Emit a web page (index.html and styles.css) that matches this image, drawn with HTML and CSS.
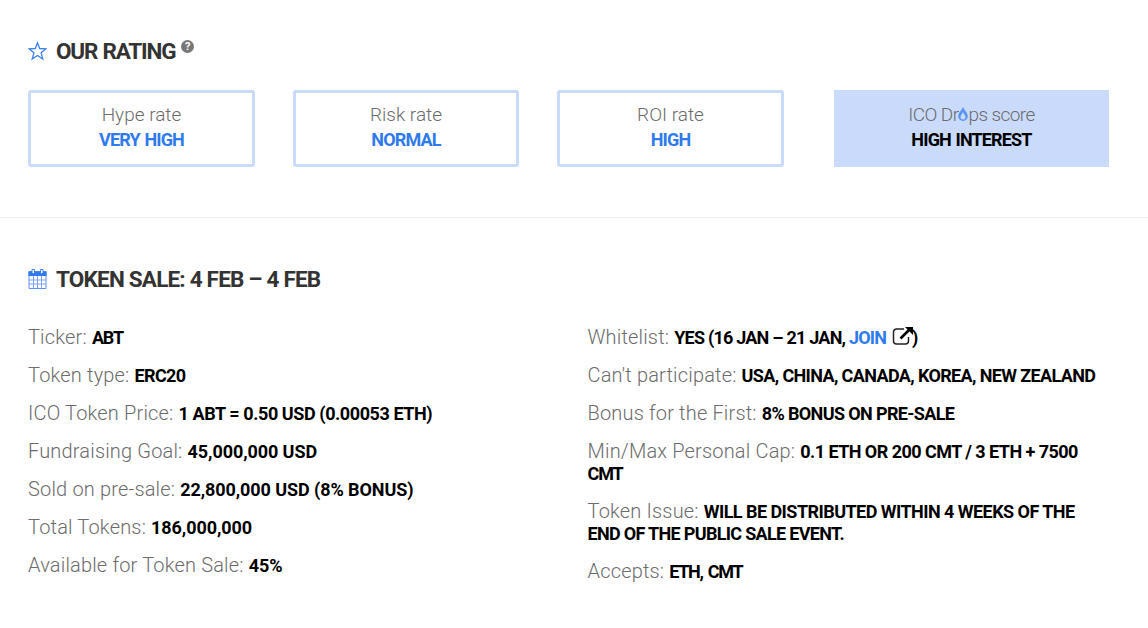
FILE: index.html
```html
<!DOCTYPE html>
<html lang="en">
<head>
  <meta charset="UTF-8">
  <meta name="viewport" content="width=device-width, initial-scale=1.0">
  <title>Token Sale</title>
  <link rel="stylesheet" href="styles.css">
</head>
<body>
  <!-- Rating -->
  <section class="rating">
    <h4 class="rating-title">
      <svg class="icon" viewBox="0 0 19 20" width="19" height="20"><path d="M9.500 1.800l2.200 5.700 6.300.3-4.900 4 1.700 6.200-5.300-3.500L4.200 18l1.700-6.200L1 7.800l6.300-.3z" fill="none" stroke="#3f80f2" stroke-width="1.300"/></svg>
      <span>OUR RATING</span>
      <span class="help">?</span>
    </h4>
    <div class="rating-list">
      <div class="rating-box"><p>Hype rate</p><strong>VERY HIGH</strong></div>
      <div class="rating-box"><p>Risk rate</p><strong>NORMAL</strong></div>
      <div class="rating-box"><p>ROI rate</p><strong>HIGH</strong></div>
      <div class="rating-box score">
        <p>ICO Dr<svg class="drop" viewBox="0 0 10 14" width="10" height="14"><path fill-rule="evenodd" d="M5 0C6 3 9.800 5.800 9.800 9.200A4.800 4.800 0 0 1 .2 9.200C.2 5.800 4 3 5 0zM5 5C4.500 6.800 2.500 8 2.500 10A2.500 2.500 0 0 0 7.500 10C7.500 8 5.500 6.800 5 5z" fill="#5b93f5"/></svg>ps score</p>
        <strong>HIGH INTEREST</strong>
      </div>
    </div>
  </section>

  <!-- Token sale -->
  <section class="sale">
    <h4>
      <svg class="icon" viewBox="0 0 19 20" width="19" height="20"><path d="M1 2.500h17v17H1z" fill="#fff" stroke="#5f8ff5" stroke-linejoin="round"/><path d="M.5 2.500h18v4.500H.5z" fill="#2f7bed"/><path d="M1 11h17M1 15h17M5.500 7v12M9.500 7v12M13.500 7v12" stroke="#7ba2f7" fill="none"/><path d="M4 .5h2.500v4H4zM12.500.5H15v4h-2.500z" fill="#fff" stroke="#3f80f2"/></svg>
      <span>TOKEN SALE: 4 FEB – 4 FEB</span>
    </h4>
    <div class="columns">
      <ul>
        <li>Ticker: <b class="tight">ABT</b></li>
        <li>Token type: <b>ERC20</b></li>
        <li>ICO Token Price: <b class="mixed">1 ABT = 0.50 USD (0.00053 ETH)</b></li>
        <li>Fundraising Goal: <b class="num">45,000,000 USD</b></li>
        <li>Sold on pre-sale: <b class="num">22,800,000 USD (8% BONUS)</b></li>
        <li>Total Tokens: <b class="num">186,000,000</b></li>
        <li>Available for Token Sale: <b class="num">45%</b></li>
      </ul>
      <ul>
        <li>Whitelist: <b class="dates">YES (16 JAN – 21 JAN, <a href="#">JOIN</a> <svg class="external" viewBox="0 0 22 20" width="22" height="20"><path d="M12 3H4.500A3 3 0 0 0 1.500 6v9a3 3 0 0 0 3 3h9a3 3 0 0 0 3-3v-4" fill="none" stroke="#222" stroke-width="1.500"/><path d="M8.500 12.500L18 3" stroke="#000" stroke-width="2.600"/><path d="M13 1h8v8z"/></svg>)</b></li>
        <li>Can't participate: <b>USA, CHINA, CANADA, KOREA, NEW ZEALAND</b></li>
        <li>Bonus for the First: <b>8% BONUS ON PRE-SALE</b></li>
        <li>Min/Max Personal Cap: <b class="long">0.1 ETH OR 200 CMT / 3 ETH + 7500<br><span class="tight">CMT</span></b></li>
        <li>Token Issue: <b class="long">WILL BE DISTRIBUTED WITHIN 4 WEEKS OF THE<br><span class="event">END OF THE PUBLIC SALE EVENT.</span></b></li>
        <li>Accepts: <b class="accepts">ETH, CMT</b></li>
      </ul>
    </div>
  </section>
</body>
</html>
```
FILE: styles.css
```css
* {
  box-sizing: border-box;
}
body {
  margin: 0;
  background: #fff;
  font-family: Roboto, sans-serif;
  color: #6c6c6c;
}
h4, p, ul {
  margin: 0;
  padding: 0;
}
h4 {
  display: flex;
  align-items: center;
  height: 30px;
  font-size: 22.5px;
  font-weight: 700;
  line-height: 30px;
  letter-spacing: -0.8px;
  color: #333;
}
.rating-title {
  letter-spacing: -1.2px;
  word-spacing: 1px;
}
.icon {
  margin-right: 9px;
}
.rating {
  height: 218px;
  padding: 36px 39px 0 28px;
  border-bottom: 1px solid #eee;
}
.help {
  width: 13px;
  height: 13px;
  margin: -10px 0 0 6px;
  border-radius: 50%;
  background: #777;
  color: #fff;
  font-size: 11px;
  line-height: 13px;
  text-align: center;
  letter-spacing: 0;
}
.rating-list {
  display: grid;
  grid-template-columns: 227px 226px 227px 275px;
  column-gap: 38px;
  margin-top: 24px;
}
.rating-box {
  height: 77px;
  padding-top: 9px;
  border: 3px solid #c9dafb;
  border-radius: 3px;
  text-align: center;
  line-height: 25px;
}
.rating-box p {
  height: 25px;
  font-size: 19px;
  font-weight: 300;
}
.rating-box strong {
  display: block;
  font-size: 18px;
  letter-spacing: -0.85px;
  word-spacing: 1px;
  color: #2f7bed;
}
.score {
  margin-left: 12px;
  width: 275px;
  background: #c9dafb;
  border-radius: 0;
}
.rating-box.score p {
  letter-spacing: -0.6px;
}
.rating-box.score strong {
  color: #000;
}
.drop {
  margin-left: -1px;
  margin-right: 1px;
  vertical-align: 0;
}
.sale {
  padding: 46px 28px 0;
}
.columns {
  display: grid;
  grid-template-columns: 559.5px 1fr;
  margin-top: 32px;
}
ul {
  list-style: none;
}
li {
  margin-bottom: 16px;
  font-size: 20px;
  font-weight: 300;
  line-height: 22px;
  letter-spacing: 0.17px;
  white-space: nowrap;
}
li b {
  font-size: 18px;
  font-weight: 700;
  line-height: 1;
  letter-spacing: -0.63px;
  color: #000;
}
li .tight {
  letter-spacing: -1.1px;
}
li .mixed {
  letter-spacing: -0.42px;
}
li .num {
  letter-spacing: -0.08px;
}
li .dates {
  letter-spacing: -0.78px;
}
li .long {
  letter-spacing: -0.54px;
}
li .event {
  letter-spacing: -0.68px;
}
li .accepts {
  letter-spacing: -1.3px;
  word-spacing: 2px;
}
li a {
  color: #2f7bed;
  text-decoration: none;
}
.external {
  margin: -8px -2px -4px 2px;
  vertical-align: 2px;
}
```
